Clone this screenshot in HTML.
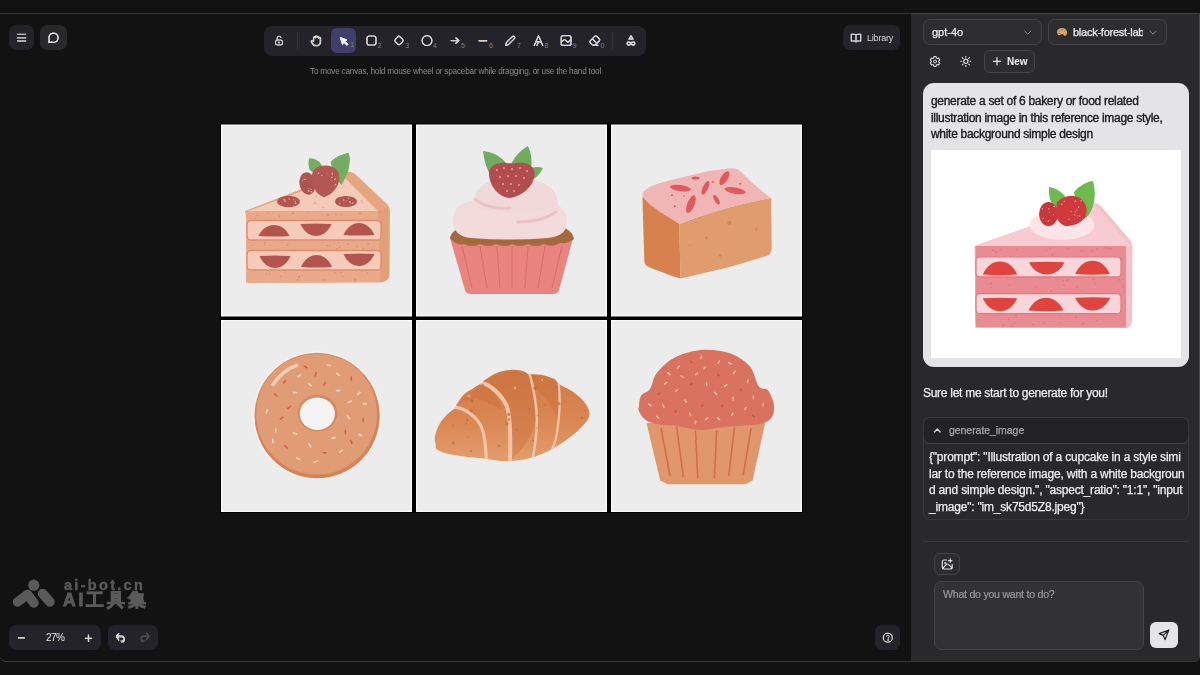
<!DOCTYPE html>
<html><head><meta charset="utf-8">
<style>
*{margin:0;padding:0;box-sizing:border-box}
html,body{width:1200px;height:675px;overflow:hidden;background:#121212;font-family:"Liberation Sans",sans-serif}
.a{position:absolute}
#frame{position:absolute;left:0;top:13px;width:1200px;height:649px;border-top:1.5px solid #353537;border-bottom:1.5px solid #3a3a3c;border-right:1px solid #48484a;border-radius:0 0 6px 6px;background:#121212}
.isl{position:absolute;background:#232329;border-radius:7px}
.num{position:absolute;font-size:7px;line-height:1;color:#808080;margin-top:-0.6px}
#panel{position:absolute;left:911.2px;top:13px;width:287.8px;height:647.5px;border-top:1.8px solid #444446;background:#29292b;border-radius:0 0 5px 0}
.sel{position:absolute;border:1px solid #444446;background:#2d2d2f;border-radius:7px}
.txt{position:absolute;white-space:nowrap;line-height:1;will-change:transform}
svg.ov{position:absolute;left:0;top:0;overflow:visible}
.st{fill:none;stroke:#d4d4d4;stroke-width:1.2;stroke-linecap:round;stroke-linejoin:round}
</style></head>
<body>
<div id="frame"></div>

<!-- left top buttons -->
<div class="isl" style="left:9px;top:25px;width:25px;height:25px"></div>
<div class="isl" style="left:40px;top:25px;width:27px;height:25px;background:#29292c"></div>

<!-- toolbar -->
<div class="isl" style="left:264px;top:25.5px;width:382px;height:30px;border-radius:8px"></div>
<div class="a" style="left:331px;top:28px;width:25px;height:25px;background:#403e6a;border-radius:6px"></div>
<div class="a" style="left:297px;top:32px;width:1px;height:17px;background:#34343a"></div>
<div class="a" style="left:612px;top:32px;width:1px;height:17px;background:#34343a"></div>
<div class="num" style="left:350.2px;top:42px">1</div>
<div class="num" style="left:377.6px;top:42.5px">2</div>
<div class="num" style="left:405.2px;top:42.5px">3</div>
<div class="num" style="left:433px;top:42.5px">4</div>
<div class="num" style="left:461px;top:42.5px">5</div>
<div class="num" style="left:489px;top:42.5px">6</div>
<div class="num" style="left:517px;top:42.5px">7</div>
<div class="num" style="left:544.6px;top:42.5px">8</div>
<div class="num" style="left:572.6px;top:42.5px">9</div>
<div class="num" style="left:600.4px;top:42.5px">0</div>

<!-- hint -->
<div class="txt" style="left:310.4px;top:67.8px;font-size:8.2px;letter-spacing:-0.2px;color:#8a8a8a">To move canvas, hold mouse wheel or spacebar while dragging, or use the hand tool</div>

<!-- library -->
<div class="isl" style="left:843.3px;top:25.3px;width:57px;height:25px"></div>
<div class="txt" style="left:867.2px;top:33.6px;font-size:9px;letter-spacing:-0.2px;color:#d6d6d6">Library</div>

<!-- canvas image -->
<svg class="ov" width="1200" height="675" viewBox="0 0 1200 675"><rect x="220" y="123.5" width="583" height="389.5" fill="#000"/>
<rect x="221" y="124.5" width="191" height="192" fill="#f7f7f7"/>
<rect x="222.5" y="126.0" width="188" height="189" fill="#ececec"/>
<rect x="416" y="124.5" width="191" height="192" fill="#f7f7f7"/>
<rect x="417.5" y="126.0" width="188" height="189" fill="#ececec"/>
<rect x="611" y="124.5" width="191" height="192" fill="#f7f7f7"/>
<rect x="612.5" y="126.0" width="188" height="189" fill="#ececec"/>
<rect x="221" y="320" width="191" height="192" fill="#f7f7f7"/>
<rect x="222.5" y="321.5" width="188" height="189" fill="#ececec"/>
<rect x="416" y="320" width="191" height="192" fill="#f7f7f7"/>
<rect x="417.5" y="321.5" width="188" height="189" fill="#ececec"/>
<rect x="611" y="320" width="191" height="192" fill="#f7f7f7"/>
<rect x="612.5" y="321.5" width="188" height="189" fill="#ececec"/>
<g>
<path d="M245,211 L344,172.5 Q350,170.5 355,174 L387,204 Q390,207 390,212 L389.5,275 Q389,281 382,282 L250,283 Q246.5,283 246.5,279 L246,216 Z" fill="#e7a57f"/>
<path d="M247,211.5 L343,176 L378,211 Z" fill="#f3cbb6"/>
<rect x="246" y="211" width="134" height="71.5" fill="#eaaa8a"/>
<path d="M378,211 L388,207 L389,276 Q388,281 380,282.5 Z" fill="#e59f78"/>
<rect x="247" y="220.5" width="134" height="19.5" rx="4" fill="#f4ccb9" stroke="#df8b6d" stroke-width="1.3"/>
<rect x="247" y="250.5" width="134" height="19.5" rx="4" fill="#f4ccb9" stroke="#df8b6d" stroke-width="1.3"/>
<circle cx="293.0" cy="213.1" r="0.93" fill="#e0906f"/>
<circle cx="258.9" cy="215.8" r="0.78" fill="#e0906f"/>
<circle cx="256.9" cy="215.6" r="0.62" fill="#e0906f"/>
<circle cx="308.0" cy="212.5" r="0.65" fill="#e0906f"/>
<circle cx="306.7" cy="217.8" r="0.66" fill="#e0906f"/>
<circle cx="279.4" cy="216.4" r="1.07" fill="#e0906f"/>
<circle cx="327.5" cy="214.8" r="1.09" fill="#e0906f"/>
<circle cx="255.3" cy="218.0" r="0.74" fill="#e0906f"/>
<circle cx="268.6" cy="212.8" r="0.75" fill="#e0906f"/>
<circle cx="360.0" cy="213.3" r="0.89" fill="#e0906f"/>
<circle cx="335.9" cy="214.6" r="0.87" fill="#e0906f"/>
<circle cx="257.5" cy="212.4" r="0.70" fill="#e0906f"/>
<circle cx="341.5" cy="215.0" r="0.76" fill="#e0906f"/>
<circle cx="328.6" cy="215.2" r="0.75" fill="#e0906f"/>
<circle cx="357.0" cy="246.9" r="0.72" fill="#e0906f"/>
<circle cx="327.1" cy="245.7" r="1.04" fill="#e0906f"/>
<circle cx="348.2" cy="244.0" r="1.09" fill="#e0906f"/>
<circle cx="265.1" cy="244.9" r="0.98" fill="#e0906f"/>
<circle cx="269.7" cy="245.4" r="0.62" fill="#e0906f"/>
<circle cx="339.9" cy="247.4" r="0.89" fill="#e0906f"/>
<circle cx="368.1" cy="244.2" r="0.95" fill="#e0906f"/>
<circle cx="329.8" cy="246.1" r="0.83" fill="#e0906f"/>
<circle cx="363.2" cy="248.6" r="0.84" fill="#e0906f"/>
<circle cx="339.3" cy="242.4" r="0.95" fill="#e0906f"/>
<circle cx="337.0" cy="249.0" r="1.01" fill="#e0906f"/>
<circle cx="287.7" cy="244.7" r="0.93" fill="#e0906f"/>
<circle cx="252.1" cy="245.2" r="0.68" fill="#e0906f"/>
<circle cx="264.9" cy="242.4" r="0.98" fill="#e0906f"/>
<circle cx="266.6" cy="274.2" r="0.80" fill="#e0906f"/>
<circle cx="367.5" cy="272.7" r="0.82" fill="#e0906f"/>
<circle cx="323.7" cy="280.0" r="1.01" fill="#e0906f"/>
<circle cx="366.5" cy="274.5" r="0.81" fill="#e0906f"/>
<circle cx="297.8" cy="280.0" r="1.08" fill="#e0906f"/>
<circle cx="269.5" cy="273.6" r="0.72" fill="#e0906f"/>
<circle cx="280.7" cy="276.4" r="0.89" fill="#e0906f"/>
<circle cx="284.7" cy="272.0" r="0.81" fill="#e0906f"/>
<circle cx="299.2" cy="277.1" r="1.08" fill="#e0906f"/>
<circle cx="342.9" cy="276.6" r="0.91" fill="#e0906f"/>
<circle cx="341.0" cy="272.5" r="1.05" fill="#e0906f"/>
<circle cx="355.1" cy="279.9" r="1.00" fill="#e0906f"/>
<circle cx="302.4" cy="275.6" r="0.65" fill="#e0906f"/>
<circle cx="335.3" cy="272.6" r="0.63" fill="#e0906f"/>
<circle cx="381.7" cy="222.4" r="0.77" fill="#e0906f"/>
<circle cx="380.4" cy="212.0" r="0.68" fill="#e0906f"/>
<circle cx="380.8" cy="235.3" r="0.61" fill="#e0906f"/>
<circle cx="387.0" cy="251.3" r="0.67" fill="#e0906f"/>
<circle cx="382.0" cy="234.2" r="0.78" fill="#e0906f"/>
<circle cx="381.0" cy="266.3" r="1.10" fill="#e0906f"/>
<circle cx="383.7" cy="243.0" r="0.64" fill="#e0906f"/>
<circle cx="380.8" cy="233.9" r="0.73" fill="#e0906f"/>
<path d="M258.5,236 C265.3,221.4 282.7,221.4 289.5,236 Q274,237.2 258.5,236 Z" fill="#b4544f"/>
<path d="M300.5,224 C307.3,240.0 324.7,240.0 331.5,224 Q316,222.8 300.5,224 Z" fill="#b4544f"/>
<path d="M343.5,235 C350.3,219.0 367.7,219.0 374.5,235 Q359,236.2 343.5,235 Z" fill="#b4544f"/>
<path d="M259.5,256 C266.3,272.0 283.7,272.0 290.5,256 Q275,254.8 259.5,256 Z" fill="#b4544f"/>
<path d="M301.0,267 C307.8,251.0 325.2,251.0 332.0,267 Q316.5,268.2 301.0,267 Z" fill="#b4544f"/>
<path d="M343.5,254 C350.3,270.0 367.7,270.0 374.5,254 Q359,252.8 343.5,254 Z" fill="#b4544f"/>
<ellipse cx="288.5" cy="201.5" rx="11.5" ry="5.8" fill="#b4544f"/>
<ellipse cx="346" cy="201.5" rx="11" ry="5.5" fill="#b4544f"/>
<circle cx="293.4" cy="199.8" r="0.51" fill="#f1c6b4"/>
<circle cx="295.3" cy="201.6" r="0.54" fill="#f1c6b4"/>
<circle cx="289.1" cy="199.1" r="0.66" fill="#f1c6b4"/>
<circle cx="295.7" cy="203.3" r="0.71" fill="#f1c6b4"/>
<circle cx="284.9" cy="200.8" r="0.55" fill="#f1c6b4"/>
<circle cx="349.8" cy="201.7" r="0.73" fill="#f1c6b4"/>
<circle cx="343.6" cy="200.1" r="0.74" fill="#f1c6b4"/>
<circle cx="352.8" cy="203.3" r="0.74" fill="#f1c6b4"/>
<circle cx="350.5" cy="202.7" r="0.57" fill="#f1c6b4"/>
<circle cx="346.2" cy="200.8" r="0.51" fill="#f1c6b4"/>
<path d="M309.4,158.3 Q316,158.5 320,162.5 Q324,167 317.2,172.8 Q311,172 309.4,169.4 Q307.5,163 309.4,158.3 Z" fill="#72ad62"/>
<path d="M330.6,161.7 Q338,155 348.3,152.8 Q351,158 349.4,163.9 Q349,171 346.1,176.1 L341.7,185 Q333,178 330.6,161.7 Z" fill="#72ad62"/>
<ellipse cx="307.5" cy="183.5" rx="8" ry="11.2" transform="rotate(-10 307.5 183.5)" fill="#ad5350"/>
<path d="M312,176 C312,168 320,165 326,165.5 C333,166 339,169 339.4,177 C339.6,186 332,195 324,197.2 C316,195 312,186 312,176 Z" fill="#b35752"/>
<circle cx="302.3" cy="180.5" r="0.51" fill="#f1c6b4"/>
<circle cx="308.9" cy="191.3" r="0.56" fill="#f1c6b4"/>
<circle cx="311.4" cy="191.8" r="0.69" fill="#f1c6b4"/>
<circle cx="305.6" cy="179.5" r="0.51" fill="#f1c6b4"/>
<circle cx="304.0" cy="179.3" r="0.61" fill="#f1c6b4"/>
<circle cx="311.0" cy="189.4" r="0.57" fill="#f1c6b4"/>
<circle cx="308.5" cy="188.8" r="0.47" fill="#f1c6b4"/>
<circle cx="308.6" cy="190.6" r="0.65" fill="#f1c6b4"/>
<circle cx="331.0" cy="180.5" r="0.49" fill="#f1c6b4"/>
<circle cx="331.8" cy="177.3" r="0.65" fill="#f1c6b4"/>
<circle cx="335.4" cy="178.7" r="0.55" fill="#f1c6b4"/>
<circle cx="334.9" cy="185.9" r="0.49" fill="#f1c6b4"/>
<circle cx="318.5" cy="173.3" r="0.68" fill="#f1c6b4"/>
<circle cx="332.1" cy="173.2" r="0.66" fill="#f1c6b4"/>
<circle cx="335.6" cy="184.5" r="0.54" fill="#f1c6b4"/>
<circle cx="327.0" cy="172.9" r="0.45" fill="#f1c6b4"/>
<circle cx="335.4" cy="184.3" r="0.58" fill="#f1c6b4"/>
<circle cx="334.7" cy="179.5" r="0.67" fill="#f1c6b4"/>
<circle cx="332.5" cy="174.6" r="0.51" fill="#f1c6b4"/>
<circle cx="321.9" cy="175.3" r="0.60" fill="#f1c6b4"/>
<circle cx="285.3" cy="201.4" r="0.65" fill="#e8a58a"/>
<circle cx="361.5" cy="200.6" r="0.78" fill="#e8a58a"/>
<circle cx="323.3" cy="207.8" r="0.77" fill="#e8a58a"/>
<circle cx="362.4" cy="202.5" r="0.81" fill="#e8a58a"/>
<circle cx="316.3" cy="196.2" r="0.78" fill="#e8a58a"/>
<circle cx="348.5" cy="198.2" r="0.79" fill="#e8a58a"/>
<circle cx="339.8" cy="203.2" r="0.73" fill="#e8a58a"/>
<circle cx="315.6" cy="203.2" r="0.91" fill="#e8a58a"/>
<circle cx="284.1" cy="199.6" r="0.91" fill="#e8a58a"/>
<circle cx="314.4" cy="203.3" r="0.90" fill="#e8a58a"/>
</g>
<g>
<path d="M450,238 L573,238 L559,290 Q558,294 552,294 L471,294 Q466,294 465,290 Z" fill="#e8837f"/>
<path d="M462,246 L472,288" stroke="#d26a69" stroke-width="0.9" fill="none"/>
<path d="M480,246 L487,288" stroke="#d26a69" stroke-width="0.9" fill="none"/>
<path d="M497,246 L500,288" stroke="#d26a69" stroke-width="0.9" fill="none"/>
<path d="M512,246 L512,288" stroke="#d26a69" stroke-width="0.9" fill="none"/>
<path d="M528,246 L525,288" stroke="#d26a69" stroke-width="0.9" fill="none"/>
<path d="M545,246 L538,288" stroke="#d26a69" stroke-width="0.9" fill="none"/>
<path d="M562,246 L552,288" stroke="#d26a69" stroke-width="0.9" fill="none"/>
<path d="M450,238 Q452,228 468,226 L556,226 Q572,228 574,239 Q568,244 560,243 Q552,248 544,244 Q536,248 528,244 Q520,248 512,244 Q504,248 496,244 Q488,248 480,244 Q472,248 464,244 Q456,246 450,238 Z" fill="#a6693f"/>
<path d="M453,222 Q452,205 470,201 Q500,197 540,199 Q566,203 567,220 Q568,236 548,238 Q510,241 470,238 Q454,236 453,222 Z" fill="#f3dbdb"/>
<path d="M474,206 Q472,187 492,181 Q515,176 538,181 Q558,188 558,204 Q545,212 515,212 Q485,212 474,206 Z" fill="#f2d9d9"/>
<path d="M475,199 Q488,210 510,208" stroke="#ecc3c4" stroke-width="3" fill="none" stroke-linecap="round"/>
<path d="M518,222 Q542,222 556,212" stroke="#ecc3c4" stroke-width="3" fill="none" stroke-linecap="round"/>
<path d="M483,151 Q497,152 507,164 Q505,176 497,181 Q486,175 483,151 Z" fill="#6fac5d"/>
<path d="M511,164 Q517,152 528,146 Q533,157 531,169 Q522,173 511,164 Z" fill="#6fac5d"/>
<path d="M524,170 Q535,165 543,168 Q538,178 528,182 Z" fill="#6fac5d"/>
<path d="M489,175 C488,166 497,162 506,163 C513,164 518,162 525,163 C533,165 536,171 534,178 C532,187 522,196 510,198 C498,197 490,186 489,175 Z" fill="#b14c4f"/>
<ellipse cx="497" cy="170" rx="0.7" ry="0.9" fill="#f1cf9f"/>
<ellipse cx="504" cy="168" rx="0.7" ry="0.9" fill="#f1cf9f"/>
<ellipse cx="512" cy="169" rx="0.7" ry="0.9" fill="#f1cf9f"/>
<ellipse cx="520" cy="168" rx="0.7" ry="0.9" fill="#f1cf9f"/>
<ellipse cx="527" cy="171" rx="0.7" ry="0.9" fill="#f1cf9f"/>
<ellipse cx="500" cy="177" rx="0.7" ry="0.9" fill="#f1cf9f"/>
<ellipse cx="508" cy="176" rx="0.7" ry="0.9" fill="#f1cf9f"/>
<ellipse cx="516" cy="176" rx="0.7" ry="0.9" fill="#f1cf9f"/>
<ellipse cx="524" cy="178" rx="0.7" ry="0.9" fill="#f1cf9f"/>
<ellipse cx="503" cy="184" rx="0.7" ry="0.9" fill="#f1cf9f"/>
<ellipse cx="511" cy="184" rx="0.7" ry="0.9" fill="#f1cf9f"/>
<ellipse cx="519" cy="185" rx="0.7" ry="0.9" fill="#f1cf9f"/>
<ellipse cx="507" cy="191" rx="0.7" ry="0.9" fill="#f1cf9f"/>
<ellipse cx="514" cy="191" rx="0.7" ry="0.9" fill="#f1cf9f"/>
</g>
<g>
<path d="M642.4,197 L679.4,223.9 L680.4,278.5 Q668,275 659.1,271.1 Q650,268 646.1,265.6 Q644,263 644.3,260 Z" fill="#d7824e"/>
<path d="M679.4,223.9 Q725,206 771.1,198 L771.7,248.9 Q771,254 767.4,255.4 Q748,262 727.6,267.4 Q704,273 680.4,278.5 Z" fill="#e09c6d"/>
<path d="M642.4,196.1 C642.5,192 644,191 646.1,189.6 C650,186.5 653,185.5 657.2,184.1 C665,181.5 673,179.5 681.3,177.6 C691,175.5 700,173 709.1,171.1 C716,170 724,168.8 731.3,168.3 C734,168.1 736.5,168.8 738.7,170.2 C743,173 746,177 749.8,180.4 C755,185 760,189 764.6,193.3 C767,195 769,196.5 771.1,198 C762,199.5 754,201.5 746.1,203.5 C737,205.5 727,208 718.3,210.9 C711,213 703,215 696.1,217.4 C690,219.5 685,221.5 679.4,223.9 C674,220 668,217 662.8,213.7 C658,210.5 654,207.5 649.8,204.4 C647,202 644.5,199.5 642.4,196.1 Z" fill="#f0b6b6"/>
<ellipse cx="680.4" cy="188.1" rx="10.6" ry="3.1" transform="rotate(8 680.4 188.1)" fill="#e05a5c"/>
<ellipse cx="690.9" cy="204.1" rx="3.6" ry="9.3" transform="rotate(22 690.9 204.1)" fill="#e05a5c"/>
<ellipse cx="705.4" cy="187.8" rx="2.6" ry="7.5" transform="rotate(25 705.4 187.8)" fill="#e05a5c"/>
<ellipse cx="724.4" cy="178.1" rx="3.4" ry="7.8" transform="rotate(32 724.4 178.1)" fill="#e05a5c"/>
<ellipse cx="735" cy="190.6" rx="10.6" ry="3.1" transform="rotate(10 735 190.6)" fill="#e05a5c"/>
<ellipse cx="716.5" cy="199.8" rx="2.1" ry="5.3" transform="rotate(-30 716.5 199.8)" fill="#e05a5c"/>
<ellipse cx="695.6" cy="178.1" rx="4" ry="1.5" transform="rotate(0 695.6 178.1)" fill="#e05a5c"/>
<circle cx="672" cy="195.2" r="1.0" fill="#e05a5c"/>
<circle cx="674.8" cy="206.3" r="1.1" fill="#e05a5c"/>
<circle cx="684.1" cy="196.1" r="0.9" fill="#e05a5c"/>
<circle cx="712.8" cy="181.9" r="0.9" fill="#e05a5c"/>
<circle cx="740.2" cy="183.7" r="1.0" fill="#e05a5c"/>
<circle cx="729.4" cy="223" r="2.1" fill="#d28556"/>
<circle cx="706.3" cy="237.8" r="1.4" fill="#d28556"/>
<circle cx="756.3" cy="229.4" r="1.3" fill="#d28556"/>
<circle cx="720.2" cy="255.4" r="1.3" fill="#d28556"/>
<circle cx="689.6" cy="245.2" r="0.7" fill="#d28556"/>
<circle cx="661" cy="226.7" r="0.8" fill="#d28556"/>
<circle cx="661.9" cy="250.7" r="0.7" fill="#d28556"/>
</g>
<g>
<circle cx="317" cy="415.5" r="63.3" fill="none" stroke="#f3f3f3" stroke-width="1.4"/>
<circle cx="317.2" cy="416" r="62.3" fill="#d7835a"/>
<circle cx="316.6" cy="414" r="60.5" fill="#e09c74"/>
<circle cx="317" cy="415.3" r="62" fill="none" stroke="#d8834f" stroke-width="0.9"/>
<ellipse cx="317.5" cy="413" rx="19.8" ry="18.3" fill="#d4885c"/>
<ellipse cx="317.3" cy="413.8" rx="17.6" ry="16.2" fill="#f3f3f3"/>
<path d="M273,384.5 Q283,370 296.5,365.5" stroke="#f2cdb6" stroke-width="3.6" fill="none" stroke-linecap="round"/>
<rect x="303.0" y="366.1" width="4.8" height="1.6" rx="0.8" fill="#d0604f" transform="rotate(30 305.4 366.9)"/>
<rect x="282.2" y="380.9" width="4.8" height="1.6" rx="0.8" fill="#d0604f" transform="rotate(124 284.6 381.7)"/>
<rect x="322.2" y="382.9" width="4.8" height="1.6" rx="0.8" fill="#d0604f" transform="rotate(114 324.6 383.7)"/>
<rect x="348.9" y="377.9" width="4.8" height="1.6" rx="0.8" fill="#d0604f" transform="rotate(86 351.3 378.7)"/>
<rect x="273.3" y="394.2" width="4.8" height="1.6" rx="0.8" fill="#d0604f" transform="rotate(39 275.7 395.0)"/>
<rect x="286.7" y="406.6" width="4.8" height="1.6" rx="0.8" fill="#d0604f" transform="rotate(143 289.1 407.4)"/>
<rect x="279.3" y="417.3" width="4.8" height="1.6" rx="0.8" fill="#d0604f" transform="rotate(145 281.7 418.1)"/>
<rect x="360.7" y="419.4" width="4.8" height="1.6" rx="0.8" fill="#d0604f" transform="rotate(92 363.1 420.2)"/>
<rect x="343.0" y="431.2" width="4.8" height="1.6" rx="0.8" fill="#d0604f" transform="rotate(91 345.4 432.0)"/>
<rect x="283.7" y="446.1" width="4.8" height="1.6" rx="0.8" fill="#d0604f" transform="rotate(42 286.1 446.9)"/>
<rect x="322.2" y="452.0" width="4.8" height="1.6" rx="0.8" fill="#d0604f" transform="rotate(1 324.6 452.8)"/>
<rect x="348.9" y="441.0" width="4.8" height="1.6" rx="0.8" fill="#d0604f" transform="rotate(67 351.3 441.8)"/>
<rect x="313.3" y="373.5" width="4.8" height="1.6" rx="0.8" fill="#d0604f" transform="rotate(105 315.7 374.3)"/>
<rect x="326.7" y="364.6" width="4.8" height="1.6" rx="0.8" fill="#f5d8c6" transform="rotate(12 329.1 365.4)"/>
<rect x="297.0" y="374.9" width="4.8" height="1.6" rx="0.8" fill="#f5d8c6" transform="rotate(143 299.4 375.7)"/>
<rect x="307.4" y="383.8" width="4.8" height="1.6" rx="0.8" fill="#f5d8c6" transform="rotate(42 309.8 384.6)"/>
<rect x="335.6" y="373.5" width="4.8" height="1.6" rx="0.8" fill="#f5d8c6" transform="rotate(42 338.0 374.3)"/>
<rect x="292.6" y="391.8" width="4.8" height="1.6" rx="0.8" fill="#f5d8c6" transform="rotate(8 295.0 392.6)"/>
<rect x="335.6" y="389.8" width="4.8" height="1.6" rx="0.8" fill="#f5d8c6" transform="rotate(180 338.0 390.6)"/>
<rect x="356.3" y="392.7" width="4.8" height="1.6" rx="0.8" fill="#f5d8c6" transform="rotate(133 358.7 393.5)"/>
<rect x="347.4" y="401.0" width="4.8" height="1.6" rx="0.8" fill="#f5d8c6" transform="rotate(158 349.8 401.8)"/>
<rect x="264.5" y="410.5" width="4.8" height="1.6" rx="0.8" fill="#f5d8c6" transform="rotate(111 266.9 411.3)"/>
<rect x="362.2" y="403.1" width="4.8" height="1.6" rx="0.8" fill="#f5d8c6" transform="rotate(6 364.6 403.9)"/>
<rect x="345.9" y="416.4" width="4.8" height="1.6" rx="0.8" fill="#f5d8c6" transform="rotate(59 348.3 417.2)"/>
<rect x="273.3" y="429.8" width="4.8" height="1.6" rx="0.8" fill="#f5d8c6" transform="rotate(90 275.7 430.6)"/>
<rect x="292.6" y="432.7" width="4.8" height="1.6" rx="0.8" fill="#f5d8c6" transform="rotate(21 295.0 433.5)"/>
<rect x="331.1" y="437.2" width="4.8" height="1.6" rx="0.8" fill="#f5d8c6" transform="rotate(171 333.5 438.0)"/>
<rect x="307.4" y="444.6" width="4.8" height="1.6" rx="0.8" fill="#f5d8c6" transform="rotate(66 309.8 445.4)"/>
<rect x="357.8" y="434.2" width="4.8" height="1.6" rx="0.8" fill="#f5d8c6" transform="rotate(28 360.2 435.0)"/>
<rect x="338.5" y="450.5" width="4.8" height="1.6" rx="0.8" fill="#f5d8c6" transform="rotate(147 340.9 451.3)"/>
<rect x="295.6" y="457.9" width="4.8" height="1.6" rx="0.8" fill="#f5d8c6" transform="rotate(22 298.0 458.7)"/>
<rect x="313.3" y="460.9" width="4.8" height="1.6" rx="0.8" fill="#f5d8c6" transform="rotate(167 315.7 461.7)"/>
<rect x="270.4" y="440.1" width="4.8" height="1.6" rx="0.8" fill="#f5d8c6" transform="rotate(82 272.8 440.9)"/>
</g>
<defs><clipPath id="crc"><path id="crp" d="M435.7,444.8 C435.4,442.8 434.2,440.1 434.9,436.6 C435.6,433.1 437.6,427.4 439.8,423.6 C442.0,419.8 445.3,416.4 447.9,413.8 C450.5,411.2 453.8,409.7 455.3,408.1 C456.8,406.5 455.4,406.3 456.9,404.0 C458.4,401.7 461.3,396.9 464.2,394.2 C467.1,391.5 471.0,389.6 474.0,387.7 C477.0,385.8 480.3,384.1 482.2,382.8 C484.1,381.5 482.7,381.4 485.4,379.6 C488.1,377.8 493.9,373.8 498.5,372.2 C503.1,370.6 509.0,369.9 513.2,369.8 C517.4,369.7 521.2,370.7 523.8,371.4 C526.4,372.1 525.8,373.3 528.6,373.9 C531.5,374.4 536.7,373.9 540.9,374.7 C545.1,375.5 550.8,377.2 553.9,378.8 C557.0,380.4 556.6,382.5 559.6,384.5 C562.6,386.5 568.0,388.3 571.9,391.0 C575.8,393.7 580.4,397.6 583.3,400.8 C586.1,404.1 588.2,407.5 589.0,410.5 C589.8,413.5 589.7,415.7 588.2,418.7 C586.7,421.7 583.3,425.2 580.0,428.5 C576.7,431.8 573.0,435.1 568.6,438.3 C564.2,441.6 559.3,445.0 553.9,448.0 C548.5,451.0 542.0,454.1 536.0,456.2 C530.0,458.2 523.7,459.5 518.0,460.3 C512.3,461.1 507.4,461.4 501.7,461.1 C496.0,460.8 490.3,459.4 483.8,458.6 C477.3,457.8 469.1,457.1 462.6,456.2 C456.1,455.2 449.1,454.1 444.7,452.9 C440.3,451.7 438.0,450.2 436.5,448.9 C435.0,447.5 436.0,446.9 435.7,444.8Z"/></clipPath>
<linearGradient id="crg" x1="0" y1="0" x2="0" y2="1"><stop offset="0" stop-color="#d27a45"/><stop offset="0.55" stop-color="#da8753"/><stop offset="1" stop-color="#e29d6c"/></linearGradient></defs>
<path d="M435.7,444.8 C435.4,442.8 434.2,440.1 434.9,436.6 C435.6,433.1 437.6,427.4 439.8,423.6 C442.0,419.8 445.3,416.4 447.9,413.8 C450.5,411.2 453.8,409.7 455.3,408.1 C456.8,406.5 455.4,406.3 456.9,404.0 C458.4,401.7 461.3,396.9 464.2,394.2 C467.1,391.5 471.0,389.6 474.0,387.7 C477.0,385.8 480.3,384.1 482.2,382.8 C484.1,381.5 482.7,381.4 485.4,379.6 C488.1,377.8 493.9,373.8 498.5,372.2 C503.1,370.6 509.0,369.9 513.2,369.8 C517.4,369.7 521.2,370.7 523.8,371.4 C526.4,372.1 525.8,373.3 528.6,373.9 C531.5,374.4 536.7,373.9 540.9,374.7 C545.1,375.5 550.8,377.2 553.9,378.8 C557.0,380.4 556.6,382.5 559.6,384.5 C562.6,386.5 568.0,388.3 571.9,391.0 C575.8,393.7 580.4,397.6 583.3,400.8 C586.1,404.1 588.2,407.5 589.0,410.5 C589.8,413.5 589.7,415.7 588.2,418.7 C586.7,421.7 583.3,425.2 580.0,428.5 C576.7,431.8 573.0,435.1 568.6,438.3 C564.2,441.6 559.3,445.0 553.9,448.0 C548.5,451.0 542.0,454.1 536.0,456.2 C530.0,458.2 523.7,459.5 518.0,460.3 C512.3,461.1 507.4,461.4 501.7,461.1 C496.0,460.8 490.3,459.4 483.8,458.6 C477.3,457.8 469.1,457.1 462.6,456.2 C456.1,455.2 449.1,454.1 444.7,452.9 C440.3,451.7 438.0,450.2 436.5,448.9 C435.0,447.5 436.0,446.9 435.7,444.8Z" fill="url(#crg)"/>
<g clip-path="url(#crc)">
<path d="M485,380 Q510,368 530,373 Q534,395 536,420 Q530,445 510,460 Q512,420 505,400 Q495,386 485,380 Z" fill="#c96f3c" opacity="0.4"/>
<path d="M456,405 Q470,392 482,384 Q498,392 502,410 Q490,402 475,398 Q462,402 456,405 Z" fill="#c96f3c" opacity="0.4"/>
<path d="M529,374 Q548,376 559,384 Q560,400 558,420 Q550,400 538,392 Q534,382 529,374 Z" fill="#c96f3c" opacity="0.4"/>
<path d="M455.3,407.3 C464,408 476,416 480.5,425.2 C484,432 486,445 486.3,462" stroke="#f3c4a8" stroke-width="3.2" fill="none" stroke-linecap="round"/>
<path d="M482.2,383.6 C488,384 500,392 506.6,405.7 C510,414 511,430 510,463" stroke="#f3c4a8" stroke-width="4.0" fill="none" stroke-linecap="round"/>
<path d="M529.5,373.9 C533,385 536.5,405 536.8,417.1 C537,430 535,448 532,462" stroke="#f3c4a8" stroke-width="2.5" fill="none" stroke-linecap="round"/>
<path d="M558.8,384.5 C560,395 560,410 558,425.2 C557,435 555,443 552,450" stroke="#f3c4a8" stroke-width="2.3" fill="none" stroke-linecap="round"/>
<circle cx="507.0" cy="423.7" r="1.62" fill="#c76b3a" opacity="0.75"/>
<circle cx="508.9" cy="419.6" r="1.25" fill="#c76b3a" opacity="0.75"/>
<circle cx="467.3" cy="419.9" r="1.29" fill="#c76b3a" opacity="0.75"/>
<circle cx="557.4" cy="387.3" r="0.93" fill="#c76b3a" opacity="0.75"/>
<circle cx="453.4" cy="443.2" r="1.36" fill="#c76b3a" opacity="0.75"/>
<circle cx="446.2" cy="456.6" r="1.66" fill="#c76b3a" opacity="0.75"/>
<circle cx="536.8" cy="428.0" r="0.77" fill="#c76b3a" opacity="0.75"/>
<circle cx="442.2" cy="421.2" r="0.67" fill="#c76b3a" opacity="0.75"/>
<circle cx="468.2" cy="398.9" r="0.63" fill="#c76b3a" opacity="0.75"/>
<circle cx="508.7" cy="414.4" r="1.53" fill="#c76b3a" opacity="0.75"/>
<circle cx="516.8" cy="429.9" r="1.15" fill="#c76b3a" opacity="0.75"/>
<circle cx="538.0" cy="415.7" r="0.91" fill="#c76b3a" opacity="0.75"/>
<circle cx="587.7" cy="457.7" r="1.52" fill="#c76b3a" opacity="0.75"/>
<circle cx="544.8" cy="404.6" r="0.85" fill="#c76b3a" opacity="0.75"/>
<circle cx="482.8" cy="385.5" r="1.44" fill="#c76b3a" opacity="0.75"/>
<circle cx="499.3" cy="446.0" r="1.03" fill="#c76b3a" opacity="0.75"/>
<circle cx="581.8" cy="446.1" r="0.60" fill="#c76b3a" opacity="0.75"/>
<circle cx="471.0" cy="451.0" r="1.12" fill="#c76b3a" opacity="0.75"/>
<circle cx="585.1" cy="411.0" r="0.68" fill="#c76b3a" opacity="0.75"/>
<circle cx="533.2" cy="440.7" r="0.90" fill="#c76b3a" opacity="0.75"/>
<circle cx="452.9" cy="405.9" r="1.66" fill="#c76b3a" opacity="0.75"/>
<circle cx="552.2" cy="389.2" r="0.87" fill="#c76b3a" opacity="0.75"/>
<circle cx="455.0" cy="384.7" r="1.48" fill="#c76b3a" opacity="0.75"/>
<circle cx="466.3" cy="423.6" r="1.09" fill="#c76b3a" opacity="0.75"/>
<circle cx="468.2" cy="437.1" r="0.74" fill="#c76b3a" opacity="0.75"/>
<circle cx="535.3" cy="389.1" r="1.06" fill="#c76b3a" opacity="0.75"/>
<circle cx="471.5" cy="401.0" r="1.67" fill="#c76b3a" opacity="0.75"/>
<circle cx="558.9" cy="403.7" r="1.57" fill="#c76b3a" opacity="0.75"/>
<circle cx="471.2" cy="410.8" r="1.54" fill="#c76b3a" opacity="0.75"/>
<circle cx="535.0" cy="387.8" r="1.69" fill="#c76b3a" opacity="0.75"/>
<circle cx="471.6" cy="400.1" r="1.45" fill="#c76b3a" opacity="0.75"/>
<circle cx="488.7" cy="403.1" r="0.68" fill="#c76b3a" opacity="0.75"/>
<circle cx="453.3" cy="425.5" r="0.87" fill="#c76b3a" opacity="0.75"/>
<circle cx="529.0" cy="409.0" r="1.10" fill="#c76b3a" opacity="0.75"/>
<circle cx="582.0" cy="417.7" r="1.23" fill="#c76b3a" opacity="0.75"/>
<circle cx="568.2" cy="394.3" r="0.77" fill="#c76b3a" opacity="0.75"/>
<circle cx="479" cy="374.5" r="1.2" fill="#eaa27a"/>
<circle cx="469" cy="396" r="1.5" fill="#eaa27a"/>
<circle cx="515" cy="388" r="1.4" fill="#eaa27a"/>
<circle cx="542" cy="380" r="1.1" fill="#eaa27a"/>
</g>
<g>
<path d="M647.8,423.9 L763.9,423.9 L751.7,479.9 L745.5,483.2 L667.8,483.2 L661.1,479.9Z" fill="#e0976b" stroke="#e0976b" stroke-width="2" stroke-linejoin="round"/>
<path d="M661.1,428.8 L670.0,475.5" stroke="#d56d4b" stroke-width="1.6" fill="none" stroke-linecap="round"/>
<path d="M676.6,426.6 L683.3,476.6" stroke="#d56d4b" stroke-width="1.6" fill="none" stroke-linecap="round"/>
<path d="M695.5,431.1 L697.7,477.7" stroke="#d56d4b" stroke-width="1.6" fill="none" stroke-linecap="round"/>
<path d="M716.6,431.1 L714.4,477.7" stroke="#d56d4b" stroke-width="1.6" fill="none" stroke-linecap="round"/>
<path d="M734.4,427.7 L728.8,475.5" stroke="#d56d4b" stroke-width="1.6" fill="none" stroke-linecap="round"/>
<path d="M751.0,428.8 L743.3,474.4" stroke="#d56d4b" stroke-width="1.6" fill="none" stroke-linecap="round"/>
<path d="M638.9,406.6 C639.3,404.0 639.3,398.5 641.1,395.5 C643.0,392.6 647.4,392.6 650.0,388.9 C652.6,385.2 652.6,378.5 656.6,373.3 C660.7,368.1 667.0,361.7 674.4,357.8 C681.8,353.9 691.8,350.7 701.1,350.0 C710.3,349.3 721.8,350.5 729.9,353.3 C738.1,356.1 745.1,361.1 749.9,366.6 C754.7,372.2 755.8,382.7 758.8,386.6 C761.8,390.5 765.2,387.0 767.7,390.0 C770.2,392.9 773.2,400.0 773.9,404.4 C774.6,408.8 773.9,413.5 772.1,416.6 C770.4,419.8 767.7,421.8 763.2,423.3 C758.8,424.8 751.0,424.9 745.5,425.5 C739.9,426.1 734.4,426.2 729.9,426.6 C725.5,427.0 723.6,427.2 718.8,427.7 C714.0,428.3 706.6,429.9 701.1,429.9 C695.5,429.9 690.0,428.5 685.5,427.7 C681.1,427.0 678.9,426.1 674.4,425.5 C670.0,424.9 663.7,425.3 658.9,424.4 C654.1,423.5 648.9,422.2 645.5,419.9 C642.2,417.7 640.0,413.3 638.9,411.1 C637.8,408.8 638.5,409.2 638.9,406.6Z" fill="#d9725f"/>
<rect x="699.1" y="356.6" width="4" height="1.5" rx="0.75" fill="#f2c3ad" transform="rotate(105 701.1 357.3)"/>
<rect x="716.8" y="361.5" width="4" height="1.5" rx="0.75" fill="#f2c3ad" transform="rotate(119 718.8 362.2)"/>
<rect x="676.4" y="366.3" width="4" height="1.5" rx="0.75" fill="#f2c3ad" transform="rotate(125 678.4 367.1)"/>
<rect x="694.6" y="373.0" width="4" height="1.5" rx="0.75" fill="#f2c3ad" transform="rotate(143 696.6 373.8)"/>
<rect x="732.4" y="371.5" width="4" height="1.5" rx="0.75" fill="#f2c3ad" transform="rotate(119 734.4 372.2)"/>
<rect x="663.5" y="382.6" width="4" height="1.5" rx="0.75" fill="#f2c3ad" transform="rotate(141 665.5 383.3)"/>
<rect x="680.2" y="375.9" width="4" height="1.5" rx="0.75" fill="#f2c3ad" transform="rotate(33 682.2 376.6)"/>
<rect x="704.6" y="383.2" width="4" height="1.5" rx="0.75" fill="#f2c3ad" transform="rotate(86 706.6 384.0)"/>
<rect x="723.9" y="384.8" width="4" height="1.5" rx="0.75" fill="#f2c3ad" transform="rotate(143 725.9 385.5)"/>
<rect x="745.7" y="380.3" width="4" height="1.5" rx="0.75" fill="#f2c3ad" transform="rotate(108 747.7 381.1)"/>
<rect x="674.6" y="389.9" width="4" height="1.5" rx="0.75" fill="#f2c3ad" transform="rotate(138 676.6 390.6)"/>
<rect x="713.5" y="392.5" width="4" height="1.5" rx="0.75" fill="#f2c3ad" transform="rotate(44 715.5 393.3)"/>
<rect x="731.3" y="398.1" width="4" height="1.5" rx="0.75" fill="#f2c3ad" transform="rotate(86 733.3 398.8)"/>
<rect x="683.5" y="400.3" width="4" height="1.5" rx="0.75" fill="#f2c3ad" transform="rotate(60 685.5 401.1)"/>
<rect x="751.3" y="396.5" width="4" height="1.5" rx="0.75" fill="#f2c3ad" transform="rotate(95 753.3 397.3)"/>
<rect x="761.2" y="403.7" width="4" height="1.5" rx="0.75" fill="#f2c3ad" transform="rotate(99 763.2 404.4)"/>
<rect x="648.0" y="404.1" width="4" height="1.5" rx="0.75" fill="#f2c3ad" transform="rotate(32 650.0 404.8)"/>
<rect x="661.3" y="405.2" width="4" height="1.5" rx="0.75" fill="#f2c3ad" transform="rotate(56 663.3 406.0)"/>
<rect x="688.0" y="413.6" width="4" height="1.5" rx="0.75" fill="#f2c3ad" transform="rotate(64 690.0 414.4)"/>
<rect x="704.6" y="418.1" width="4" height="1.5" rx="0.75" fill="#f2c3ad" transform="rotate(140 706.6 418.8)"/>
<rect x="730.2" y="413.6" width="4" height="1.5" rx="0.75" fill="#f2c3ad" transform="rotate(122 732.2 414.4)"/>
<rect x="655.8" y="416.5" width="4" height="1.5" rx="0.75" fill="#f2c3ad" transform="rotate(49 657.8 417.3)"/>
<rect x="743.5" y="407.6" width="4" height="1.5" rx="0.75" fill="#f2c3ad" transform="rotate(126 745.5 408.4)"/>
<rect x="716.8" y="418.1" width="4" height="1.5" rx="0.75" fill="#f2c3ad" transform="rotate(47 718.8 418.8)"/>
<rect x="693.5" y="421.9" width="4" height="1.5" rx="0.75" fill="#f2c3ad" transform="rotate(104 695.5 422.6)"/>
<rect x="666.9" y="373.0" width="4" height="1.5" rx="0.75" fill="#f2c3ad" transform="rotate(45 668.9 373.8)"/>
<rect x="727.9" y="362.6" width="4" height="1.5" rx="0.75" fill="#f2c3ad" transform="rotate(30 729.9 363.3)"/>
<rect x="702.4" y="367.0" width="4" height="1.5" rx="0.75" fill="#f2c3ad" transform="rotate(135 704.4 367.8)"/>
<rect x="689.5" y="361.1" width="3.2" height="1.4" rx="0.7" fill="#c4523f" transform="rotate(55 691.1 361.8)"/>
<rect x="716.8" y="374.4" width="3.2" height="1.4" rx="0.7" fill="#c4523f" transform="rotate(56 718.4 375.1)"/>
<rect x="689.5" y="383.3" width="3.2" height="1.4" rx="0.7" fill="#c4523f" transform="rotate(148 691.1 384.0)"/>
<rect x="657.3" y="393.0" width="3.2" height="1.4" rx="0.7" fill="#c4523f" transform="rotate(135 658.9 393.7)"/>
<rect x="739.4" y="389.3" width="3.2" height="1.4" rx="0.7" fill="#c4523f" transform="rotate(65 741.0 390.0)"/>
<rect x="700.6" y="404.8" width="3.2" height="1.4" rx="0.7" fill="#c4523f" transform="rotate(145 702.2 405.5)"/>
<rect x="720.6" y="405.5" width="3.2" height="1.4" rx="0.7" fill="#c4523f" transform="rotate(95 722.2 406.2)"/>
<rect x="673.9" y="410.8" width="3.2" height="1.4" rx="0.7" fill="#c4523f" transform="rotate(111 675.5 411.5)"/>
<rect x="751.7" y="415.2" width="3.2" height="1.4" rx="0.7" fill="#c4523f" transform="rotate(55 753.3 415.9)"/>
</g>
</svg>

<!-- watermark -->
<svg class="ov" width="1200" height="675" viewBox="0 0 1200 675">
<circle cx="33.8" cy="585.2" r="5.6" fill="#5a5a5a"/>
<path d="M17.5,602 L27.5,594.5 L34,603" stroke="#5a5a5a" stroke-width="9.5" stroke-linecap="round" stroke-linejoin="round" fill="none"/>
<path d="M42.5,593.5 L50,602" stroke="#5a5a5a" stroke-width="9.5" stroke-linecap="round" fill="none"/>
</svg>
<div class="txt" style="left:63.5px;top:577.5px;font-size:14.5px;font-weight:bold;letter-spacing:2.3px;color:#5a5a5a;-webkit-text-stroke:0.4px #5a5a5a">ai-bot.cn</div>
<div class="txt" style="left:62.5px;top:591.5px;font-size:17.5px;font-weight:bold;letter-spacing:2.9px;color:#5a5a5a;-webkit-text-stroke:0.9px #5a5a5a">AI工具集</div>

<!-- bottom left -->
<div class="isl" style="left:9px;top:625px;width:92px;height:25px"></div>
<div class="isl" style="left:108px;top:625px;width:50px;height:25px"></div>
<div class="txt" style="left:46px;top:633px;font-size:10px;letter-spacing:-0.5px;color:#e4e4e4">27%</div>

<!-- help -->
<div class="isl" style="left:875.3px;top:625.3px;width:24.7px;height:24.7px"></div>

<!-- UI icons left -->
<svg class="ov" width="1200" height="675" viewBox="0 0 1200 675">
<g class="st">
<path d="M17.6,34.3h8M17.6,37.7h8M17.6,41h8" stroke-width="1.35" stroke="#b4b4b4"/>
<path d="M48.9,42.5L49.2,39.3A4.6,4.6 0 1 1 51.8,42Z" stroke-width="1.25" stroke="#dedede"/>
<!-- lock -->
<g transform="translate(279 40.8) scale(0.85) translate(-279 -40.8)" stroke="#cacaca" stroke-width="1.25">
<rect x="274.9" y="39.8" width="8.3" height="6" rx="2.6"/>
<circle cx="279" cy="42.8" r="0.5" fill="#cacaca"/>
<path d="M276.8,39.8V37.6a2.3,2.3 0 0 1 4.5,-0.6"/></g>
<!-- hand -->
<g transform="translate(315.7 40.7) scale(0.87) translate(-315.7 -40.7)" stroke="#cacaca" stroke-width="1.25"><path d="M313.5,41.5V37.6a0.9,0.9 0 0 1 1.8,0V36.7a0.9,0.9 0 0 1 1.8,0V37.2a0.9,0.9 0 0 1 1.8,0V38.2a0.9,0.9 0 0 1 1.8,0V42a4,4 0 0 1 -4,4h-0.8a4,4 0 0 1 -3.4,-1.9l-1.3,-2.2a0.9,0.9 0 0 1 1.5,-1z"/></g>
<!-- rect -->
<rect x="367" y="36" width="9" height="9" rx="2.3"/>
<!-- diamond -->
<rect x="395.6" y="37.1" width="6.8" height="6.8" rx="1.6" transform="rotate(45 399 40.5)"/>
<!-- circle -->
<circle cx="427" cy="40.6" r="4.9"/>
<!-- arrow -->
<path d="M451.3,40.6H458.8M456,37.9L458.8,40.6L456,43.3" stroke-width="1.4"/>
<!-- line -->
<path d="M479.2,40.7H486.5" stroke-width="1.5"/>
<!-- pencil -->
<path d="M506.3,42.6L512.3,36.6a1.5,1.5 0 0 1 2.1,2.1L508.4,44.7L505.8,45.3z"/>
<!-- text A -->
<path d="M534.3,45.5L538.5,35.8L542.7,45.5M536,41.8H541M537,45.5L538.5,41.5"/>
<!-- image -->
<rect x="561.2" y="35.6" width="9.8" height="9.8" rx="2"/>
<path d="M561.5,42.2L563.8,39.9a1,1 0 0 1 1.4,0L567.2,41.7a1,1 0 0 0 1.4,0L571,39.5"/>
<!-- eraser -->
<path d="M592.8,45.2L590.2,42.6a1.2,1.2 0 0 1 0,-1.7L594.9,36.2a1.2,1.2 0 0 1 1.7,0L599.4,39a1.2,1.2 0 0 1 0,1.7L594.9,45.2zM592.4,38.8L597,43.4M593,45.2H598"/>
<!-- shapes -->
<path d="M631,35.7L633,39.1H629z"/>
<circle cx="628.8" cy="43.5" r="1.7"/>
<circle cx="633.2" cy="43.5" r="1.7"/>
<!-- cursor -->
<path d="M340.6,37.6L347,40L344.6,41L347.9,44.3L346.9,45.3L343.6,42L342.7,44.3z" fill="#f2f2f2" stroke="#f2f2f2" stroke-width="0.8"/>
<!-- library book -->
<path d="M851.3,34.2h3.2a1.5,1.5 0 0 1 1.5,1.5v6.3a1,1 0 0 0 -1,-1h-3.7zM860.7,34.2h-3.2a1.5,1.5 0 0 0 -1.5,1.5v6.3a1,1 0 0 1 1,-1h3.7z" stroke-width="1.1"/>
<!-- zoom -->
<path d="M18.6,637.8H24.4M85.4,638.3H91.6M88.5,635.2V641.4" stroke-width="1.3" stroke="#d6d6d6"/>
<!-- undo -->
<path d="M118.5,637.9L116.4,635.8L118.5,633.7M116.4,635.8H121.4a2.6,2.6 0 0 1 0,5.2H120.6" stroke-width="1.2" stroke="#d6d6d6"/>
<path d="M147,637.9L149.1,635.8L147,633.7M149.1,635.8H144.1a2.6,2.6 0 0 0 0,5.2H144.9" stroke-width="1.2" stroke="#4a4a4e"/>
<!-- help -->
<div class="isl" style="left:875.3px;top:625.3px;width:24.7px;height:24.7px"></div>

<!-- UI icons left -->
<svg class="ov" width="1200" height="675" viewBox="0 0 1200 675">
<g class="st">
<path d="M17.6,34.3h8M17.6,37.7h8M17.6,41h8" stroke-width="1.35" stroke="#b4b4b4"/>
<path d="M48.9,42.5L49.2,39.3A4.6,4.6 0 1 1 51.8,42Z" stroke-width="1.25" stroke="#dedede"/>
<!-- lock -->
<g transform="translate(279 40.8) scale(0.85) translate(-279 -40.8)" stroke="#cacaca" stroke-width="1.25">
<rect x="274.9" y="39.8" width="8.3" height="6" rx="2.6"/>
<circle cx="279" cy="42.8" r="0.5" fill="#cacaca"/>
<path d="M276.8,39.8V37.6a2.3,2.3 0 0 1 4.5,-0.6"/></g>
<!-- hand -->
<path d="M313.5,41.5V37.6a0.9,0.9 0 0 1 1.8,0V36.7a0.9,0.9 0 0 1 1.8,0V37.2a0.9,0.9 0 0 1 1.8,0V38.2a0.9,0.9 0 0 1 1.8,0V42a4,4 0 0 1 -4,4h-0.8a4,4 0 0 1 -3.4,-1.9l-1.3,-2.2a0.9,0.9 0 0 1 1.5,-1z"/>
<!-- rect -->
<rect x="367" y="36" width="9" height="9" rx="2.3"/>
<!-- diamond -->
<rect x="395.6" y="37.1" width="6.8" height="6.8" rx="1.6" transform="rotate(45 399 40.5)"/>
<!-- circle -->
<circle cx="427" cy="40.6" r="4.9"/>
<!-- arrow -->
<path d="M451.3,40.6H458.8M456,37.9L458.8,40.6L456,43.3" stroke-width="1.4"/>
<!-- line -->
<path d="M479.2,40.7H486.5" stroke-width="1.5"/>
<!-- pencil -->
<path d="M506.3,42.6L512.3,36.6a1.5,1.5 0 0 1 2.1,2.1L508.4,44.7L505.8,45.3z"/>
<!-- text A -->
<path d="M534.3,45.5L538.5,35.8L542.7,45.5M536,41.8H541M537,45.5L538.5,41.5"/>
<!-- image -->
<rect x="561.2" y="35.6" width="9.8" height="9.8" rx="2"/>
<path d="M561.5,42.2L563.8,39.9a1,1 0 0 1 1.4,0L567.2,41.7a1,1 0 0 0 1.4,0L571,39.5"/>
<!-- eraser -->
<path d="M592.8,45.2L590.2,42.6a1.2,1.2 0 0 1 0,-1.7L594.9,36.2a1.2,1.2 0 0 1 1.7,0L599.4,39a1.2,1.2 0 0 1 0,1.7L594.9,45.2zM592.4,38.8L597,43.4M593,45.2H598"/>
<!-- shapes -->
<path d="M631,35.7L633,39.1H629z"/>
<circle cx="628.8" cy="43.5" r="1.7"/>
<circle cx="633.2" cy="43.5" r="1.7"/>
<!-- cursor -->
<path d="M340.6,37.6L347,40L344.6,41L347.9,44.3L346.9,45.3L343.6,42L342.7,44.3z" fill="#f2f2f2" stroke="#f2f2f2" stroke-width="0.8"/>
<!-- library book -->
<path d="M851.3,34.2h3.2a1.5,1.5 0 0 1 1.5,1.5v6.3a1,1 0 0 0 -1,-1h-3.7zM860.7,34.2h-3.2a1.5,1.5 0 0 0 -1.5,1.5v6.3a1,1 0 0 1 1,-1h3.7z" stroke-width="1.1"/>
<!-- zoom -->
<path d="M18.6,637.8H24.4M85.4,638.3H91.6M88.5,635.2V641.4" stroke-width="1.3" stroke="#d6d6d6"/>
<!-- undo -->
<path d="M118.8,641.2L116.5,637.9L118.8,634.6M116.5,637.9H121.7a2.6,2.6 0 0 1 0,5.2" stroke-width="1.4" stroke="#dcdcdc" transform="translate(0,-1)"/>
<path d="M146.6,641.2L148.9,637.9L146.6,634.6M148.9,637.9H143.7a2.6,2.6 0 0 0 0,5.2" stroke-width="1.4" stroke="#4e4e52" transform="translate(0,-1.5)"/>
<!-- help -->
<circle cx="887.8" cy="637.7" r="4.5" stroke-width="1.3"/>
<path d="M886.6,636.4a1.3,1.3 0 1 1 1.6,1.3v0.9" stroke-width="1"/>
<circle cx="888.2" cy="640" r="0.35" fill="#d4d4d4"/>
</g>
</svg>

<!-- panel -->
<div id="panel"></div>
<div class="sel" style="left:922.7px;top:19.4px;width:119.5px;height:25.5px"></div>
<div class="txt" style="left:931.8px;top:26.7px;font-size:11px;color:#ededed;-webkit-text-stroke:0.25px #ededed">gpt-4o</div>
<div class="sel" style="left:1048.2px;top:19.4px;width:119.3px;height:25.5px"></div>
<div class="txt" style="left:1072.5px;top:26.9px;font-size:11px;letter-spacing:-0.25px;color:#ededed;-webkit-text-stroke:0.25px #ededed;width:69.5px;overflow:hidden">black-forest-lab</div>
<div class="sel" style="left:984.2px;top:50.4px;width:50.8px;height:22.2px;border-radius:6px"></div>
<div class="txt" style="left:1007px;top:56.5px;font-size:10px;color:#f0f0f0;font-weight:bold">New</div>

<div class="a" style="left:922.6px;top:83.2px;width:266.7px;height:283.6px;background:#e4e4e6;border-radius:11px"></div>
<div class="txt" style="left:931px;top:92.6px;font-size:12px;line-height:16.5px;letter-spacing:-0.3px;color:#18181a;-webkit-text-stroke:0.35px #18181a">generate a set of 6 bakery or food related<br>illustration image in this reference image style,<br>white background simple design</div>
<div class="a" style="left:931px;top:150.4px;width:249.5px;height:207.6px;background:#fff"></div>
<svg class="ov" width="1200" height="675" viewBox="0 0 1200 675">
<g>
<path d="M974.5,246 L1092,204 Q1097,202 1101,206 L1130,240 Q1133,244 1132,250 L1131,322 Q1130,327 1124,328 L978,327.5 Q975.5,327 975.5,323 Z" fill="#f3c3c7"/>
<path d="M975,246 L1094,204 L1130,246 Z" fill="#f6ccd0"/>
<rect x="975.5" y="246" width="151" height="81.5" fill="#e98b90"/>
<path d="M1126,246 L1132.5,246 L1132,322 Q1131,327.5 1126,328 Z" fill="#f3c3c7"/>
<rect x="976" y="256.8" width="145" height="20.2" rx="4" fill="#f9d6d9" stroke="#e27a82" stroke-width="1.3"/>
<rect x="976" y="293.6" width="145" height="20.1" rx="4" fill="#f9d6d9" stroke="#e27a82" stroke-width="1.3"/>
<circle cx="1046.1" cy="250.6" r="0.77" fill="#e27880"/>
<circle cx="1105.4" cy="248.0" r="0.95" fill="#e27880"/>
<circle cx="1110.0" cy="248.6" r="0.98" fill="#e27880"/>
<circle cx="1068.6" cy="248.3" r="0.89" fill="#e27880"/>
<circle cx="1081.4" cy="251.2" r="1.06" fill="#e27880"/>
<circle cx="1001.1" cy="249.7" r="0.76" fill="#e27880"/>
<circle cx="1052.4" cy="254.5" r="1.00" fill="#e27880"/>
<circle cx="1091.8" cy="250.7" r="1.07" fill="#e27880"/>
<circle cx="992.9" cy="250.0" r="1.04" fill="#e27880"/>
<circle cx="1084.7" cy="251.0" r="0.74" fill="#e27880"/>
<circle cx="1017.2" cy="249.5" r="0.84" fill="#e27880"/>
<circle cx="1097.0" cy="249.4" r="1.14" fill="#e27880"/>
<circle cx="1107.3" cy="248.4" r="0.89" fill="#e27880"/>
<circle cx="1050.3" cy="248.2" r="0.91" fill="#e27880"/>
<circle cx="1111.2" cy="248.8" r="1.00" fill="#e27880"/>
<circle cx="995.8" cy="252.1" r="1.15" fill="#e27880"/>
<circle cx="1007.8" cy="279.1" r="0.74" fill="#e27880"/>
<circle cx="1057.3" cy="279.2" r="0.74" fill="#e27880"/>
<circle cx="1051.0" cy="291.0" r="0.91" fill="#e27880"/>
<circle cx="1036.5" cy="287.3" r="0.75" fill="#e27880"/>
<circle cx="1063.2" cy="281.2" r="1.00" fill="#e27880"/>
<circle cx="1118.9" cy="279.7" r="0.98" fill="#e27880"/>
<circle cx="1067.1" cy="280.9" r="0.83" fill="#e27880"/>
<circle cx="1124.2" cy="292.0" r="0.76" fill="#e27880"/>
<circle cx="1081.7" cy="291.4" r="0.82" fill="#e27880"/>
<circle cx="1067.8" cy="279.6" r="0.88" fill="#e27880"/>
<circle cx="1077.1" cy="286.7" r="1.09" fill="#e27880"/>
<circle cx="990.8" cy="283.5" r="1.13" fill="#e27880"/>
<circle cx="1063.9" cy="284.9" r="0.90" fill="#e27880"/>
<circle cx="1123.0" cy="286.5" r="0.71" fill="#e27880"/>
<circle cx="1095.5" cy="283.3" r="0.92" fill="#e27880"/>
<circle cx="1009.4" cy="284.8" r="0.86" fill="#e27880"/>
<circle cx="991.1" cy="287.2" r="0.75" fill="#e27880"/>
<circle cx="1093.3" cy="279.3" r="1.09" fill="#e27880"/>
<circle cx="1096.7" cy="320.5" r="1.05" fill="#e27880"/>
<circle cx="1014.5" cy="323.1" r="0.91" fill="#e27880"/>
<circle cx="1012.0" cy="325.6" r="0.90" fill="#e27880"/>
<circle cx="1032.8" cy="324.5" r="0.88" fill="#e27880"/>
<circle cx="1076.1" cy="316.9" r="1.12" fill="#e27880"/>
<circle cx="1016.1" cy="315.6" r="1.19" fill="#e27880"/>
<circle cx="1003.4" cy="325.4" r="1.19" fill="#e27880"/>
<circle cx="1067.2" cy="315.1" r="0.73" fill="#e27880"/>
<circle cx="1008.7" cy="319.3" r="1.01" fill="#e27880"/>
<circle cx="1120.1" cy="318.9" r="0.77" fill="#e27880"/>
<circle cx="1060.6" cy="316.5" r="0.74" fill="#e27880"/>
<circle cx="1059.7" cy="322.7" r="0.73" fill="#e27880"/>
<circle cx="1044.4" cy="322.7" r="1.08" fill="#e27880"/>
<circle cx="1034.3" cy="324.8" r="0.78" fill="#e27880"/>
<circle cx="1083.2" cy="323.5" r="1.14" fill="#e27880"/>
<circle cx="1050.7" cy="316.1" r="0.72" fill="#e27880"/>
<path d="M982.8,274.6 C990.3,257.3 1009.7,257.3 1017.2,274.6 Q1000,275.8 982.8,274.6 Z" fill="#df443f"/>
<path d="M1029.0,262.3 C1036.9,278.7 1056.7,278.7 1064.5,262.3 Q1046.8,261.1 1029.0,262.3 Z" fill="#df443f"/>
<path d="M1075.2,274.1 C1082.8,256.4 1102.2,256.4 1109.8,274.1 Q1092.5,275.3 1075.2,274.1 Z" fill="#df443f"/>
<path d="M982.8,298.3 C990.3,315.6 1009.7,315.6 1017.2,298.3 Q1000,297.1 982.8,298.3 Z" fill="#df443f"/>
<path d="M1028.5,310.6 C1036.2,293.6 1055.8,293.6 1063.5,310.6 Q1046,311.8 1028.5,310.6 Z" fill="#df443f"/>
<path d="M1075.2,297.8 C1082.9,314.8 1102.5,314.8 1110.2,297.8 Q1092.7,296.6 1075.2,297.8 Z" fill="#df443f"/>
<ellipse cx="1062" cy="225" rx="32.5" ry="14.8" fill="#fbe5e6"/>
<path d="M1049,187 Q1058,188 1065,196 Q1062,206 1055,209 Q1048,200 1049,187 Z" fill="#6cba50"/>
<path d="M1074,192 Q1083,182 1093,181 Q1096,192 1094,202 Q1092,212 1086,218 Q1076,210 1074,192 Z" fill="#6cba50"/>
<ellipse cx="1048.5" cy="214" rx="9.5" ry="12" fill="#c9363a"/>
<path d="M1057,202 Q1068,192 1080,198 Q1090,206 1085,218 Q1076,227 1065,226 Q1056,222 1056,212 Z" fill="#d03a3d"/>
<circle cx="1048.9" cy="208.8" r="0.64" fill="#f7d9d9"/>
<circle cx="1043.1" cy="218.5" r="0.52" fill="#f7d9d9"/>
<circle cx="1042.2" cy="208.8" r="0.59" fill="#f7d9d9"/>
<circle cx="1049.3" cy="212.2" r="0.50" fill="#f7d9d9"/>
<circle cx="1048.3" cy="221.1" r="0.61" fill="#f7d9d9"/>
<circle cx="1054.2" cy="206.5" r="0.75" fill="#f7d9d9"/>
<circle cx="1053.6" cy="214.7" r="0.61" fill="#f7d9d9"/>
<circle cx="1049.0" cy="220.6" r="0.47" fill="#f7d9d9"/>
<circle cx="1075.4" cy="211.9" r="0.54" fill="#f7d9d9"/>
<circle cx="1077.4" cy="215.9" r="0.48" fill="#f7d9d9"/>
<circle cx="1076.8" cy="210.0" r="0.60" fill="#f7d9d9"/>
<circle cx="1075.3" cy="201.2" r="0.63" fill="#f7d9d9"/>
<circle cx="1069.0" cy="219.3" r="0.52" fill="#f7d9d9"/>
<circle cx="1079.8" cy="216.1" r="0.64" fill="#f7d9d9"/>
<circle cx="1081.0" cy="200.8" r="0.63" fill="#f7d9d9"/>
<circle cx="1074.7" cy="214.9" r="0.57" fill="#f7d9d9"/>
<circle cx="1061.7" cy="204.2" r="0.63" fill="#f7d9d9"/>
<circle cx="1064.4" cy="201.4" r="0.56" fill="#f7d9d9"/>
<circle cx="1071.3" cy="211.8" r="0.46" fill="#f7d9d9"/>
<circle cx="1078.6" cy="207.3" r="0.68" fill="#f7d9d9"/>
</g></svg>

<div class="txt" style="left:922.6px;top:386.6px;font-size:12px;letter-spacing:-0.28px;color:#ececec;-webkit-text-stroke:0.25px #ececec">Sure let me start to generate for you!</div>

<div class="a" style="left:922.5px;top:417px;width:266.5px;height:103px;border:1px solid #38383a;border-radius:7px;background:#29292b"></div>
<div class="a" style="left:922.5px;top:417px;width:266.5px;height:26.5px;border:1px solid #3a3a3c;border-bottom:1.5px solid #404042;border-radius:7px;background:#222224"></div>
<div class="txt" style="left:949px;top:424.8px;font-size:10.5px;letter-spacing:-0.05px;color:#a6a6a6;-webkit-text-stroke:0.25px #a6a6a6">generate_image</div>
<div class="txt" style="left:929px;top:449px;font-size:12px;line-height:16.6px;letter-spacing:-0.2px;color:#efefef;-webkit-text-stroke:0.25px #efefef">{"prompt": "Illustration of a cupcake in a style simi<br>lar to the reference image, with a white backgroun<br>d and simple design.", "aspect_ratio": "1:1", "input<br>_image": "im_sk75d5Z8.jpeg"}</div>

<div class="a" style="left:922.5px;top:540.8px;width:266.5px;height:1px;background:#363638"></div>
<div class="sel" style="left:934.3px;top:552.7px;width:25.5px;height:22.8px;border-radius:6px"></div>
<div class="a" style="left:934px;top:580.6px;width:210.2px;height:69.6px;background:#323234;border:1px solid #434345;border-radius:7px"></div>
<div class="txt" style="left:943px;top:588.8px;font-size:10.6px;letter-spacing:-0.25px;color:#9a9a9a;-webkit-text-stroke:0.2px #9a9a9a">What do you want to do?</div>
<div class="a" style="left:1150px;top:622.2px;width:27.9px;height:25.4px;background:#e5e5e7;border-radius:6px"></div>

<svg class="ov" width="1200" height="675" viewBox="0 0 1200 675">
<g class="st">
<path d="M1024.6,31L1027.8,34.2L1031,31" stroke="#8a8a8a" stroke-width="1"/>
<path d="M1149.8,31L1153,34.2L1156.2,31" stroke="#8a8a8a" stroke-width="1"/>
<!-- gear -->
<path d="M933.49,58.12 L933.92,56.67 L936.08,56.67 L936.51,58.12 L937.17,58.50 L938.64,58.15 L939.72,60.02 L938.68,61.12 L938.68,61.88 L939.72,62.98 L938.64,64.85 L937.17,64.50 L936.51,64.88 L936.08,66.33 L933.92,66.33 L933.49,64.88 L932.83,64.50 L931.36,64.85 L930.28,62.98 L931.32,61.88 L931.32,61.12 L930.28,60.02 L931.36,58.15 L932.83,58.50Z" stroke="#d8d8d8" stroke-width="1.1"/>
<circle cx="935" cy="61.5" r="1.5" stroke="#d8d8d8" stroke-width="1"/>
<!-- sun -->
<circle cx="965.8" cy="61.3" r="2.1" stroke="#d8d8d8" stroke-width="1.2"/>
<path d="M965.8,56.2v1.1M965.8,65.3v1.1M960.7,61.3h1.1M969.8,61.3h1.1M962.2,57.7l0.8,0.8M968.6,64.1l0.8,0.8M962.2,64.9l0.8,-0.8M968.6,58.5l0.8,-0.8" stroke="#d8d8d8" stroke-width="1.1"/>
<!-- plus -->
<path d="M993.4,61.3H1000.6M997,57.7V64.9" stroke="#e6e6e6" stroke-width="1.25"/>
<!-- chevron up -->
<path d="M934.5,432L937.3,429.1L940.1,432" stroke="#d0d0d0" stroke-width="1.4"/>
<!-- image add -->
<path d="M946.5,560H944.3a2,2 0 0 0 -2,2V567a2,2 0 0 0 2,2H950.2a2,2 0 0 0 2,-2V564.5" stroke="#e0e0e0" stroke-width="1.2"/>
<path d="M942.6,568.3L946.6,564.3a1.2,1.2 0 0 1 1.7,0L951.8,567.5" stroke="#e0e0e0" stroke-width="1.1"/>
<circle cx="945.2" cy="563.1" r="0.8" stroke="#e0e0e0" stroke-width="0.9"/>
<path d="M950.2,558.8v3.6M948.4,560.6h3.6" stroke="#e0e0e0" stroke-width="1.1"/>
<!-- send -->
<path d="M1168.8,630L1159.2,633.6L1163.2,635.4L1165.1,639.6Z M1168.8,630L1163.2,635.4" stroke="#1e1e1e" stroke-width="1.2"/>
</g>
<!-- palette -->
<g transform="translate(1062,32)">
<path d="M-4.8,-1.2C-4.2,-3.8 -0.8,-4.8 2.4,-3.6C5,-2.6 5.6,0.2 4.6,2.4C3.8,4 1.8,4 1.4,2.8C1,1.8 -0.2,1.6 -1,2.6C-2,3.8 -4,3.4 -4.6,2C-5,1 -5,0 -4.8,-1.2Z" fill="#e0a85a"/>
<circle cx="-2.6" cy="-1.2" r="1.1" fill="#5d9ee8"/>
<circle cx="0.2" cy="-2.6" r="1.1" fill="#e85a5a"/>
<circle cx="2.8" cy="-1.2" r="1" fill="#6cc05a"/>
<circle cx="-2.5" cy="1.6" r="1" fill="#a85ae8"/>
</g>
</svg>
</body></html>
